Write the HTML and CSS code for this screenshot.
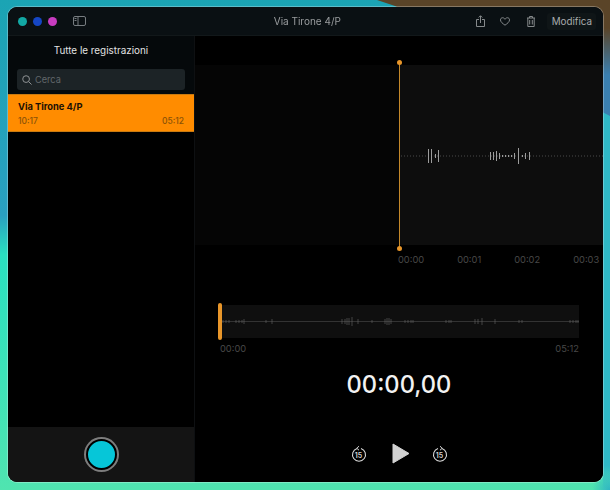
FILE: index.html
```html
<!DOCTYPE html>
<html>
  <head>
    <title>Memo Vocali</title>
    <link rel="stylesheet" href="styles.css">
  </head>
  <body>
    <div class="window">
      <header class="titlebar">
        <div class="lights">
          <span class="light teal"></span>
          <span class="light blue"></span>
          <span class="light pink"></span>
        </div>
        <svg class="sidebar-icon" width="13" height="10" viewBox="0 0 13 10" fill="none" stroke="#777d80" stroke-width="1">
          <rect x="0.5" y="0.5" width="12" height="9" rx="1.5"/>
          <path d="M5 0.5v9M1.5 2.5h2M1.5 4.5h2"/>
        </svg>
        <div class="doc-title">Via Tirone 4/P</div>
        <div class="tools">
          <svg class="share-icon" width="9" height="12" viewBox="0 0 9 12" fill="none" stroke="#85898b" stroke-width="1">
            <path d="M3 4.500H0.500v7h8v-7H6M4.500 8V1M2.700 2.500l1.800-1.800 1.800 1.800"/>
          </svg>
          <svg class="heart-icon" width="10" height="9" viewBox="0 0 13 11" fill="none" stroke="#85898b" stroke-width="1.300">
            <path d="M6.500 10.300C3.500 8.200.6 6 .6 3.400.6 1.800 1.800.6 3.300.6c1.300 0 2.500.8 3.200 2 .7-1.200 1.900-2 3.200-2 1.500 0 2.700 1.200 2.700 2.800 0 2.600-2.900 4.800-5.900 6.900z"/>
          </svg>
          <svg class="trash-icon" width="8" height="11" viewBox="0 0 8 11" fill="none" stroke="#85898b" stroke-width="1">
            <path d="M0 2h8M2.500 2V0.500h3V2M0.800 2v8.500h6.400V2M2.700 4v4.500M5.300 4v4.500"/>
          </svg>
          <span class="edit-btn">Modifica</span>
        </div>
      </header>
      <div class="content">
        <aside class="sidebar">
          <div class="sidebar-top">
            <h2 class="sidebar-title">Tutte le registrazioni</h2>
            <div class="search">
              <svg width="10" height="10" viewBox="0 0 11 11" fill="none" stroke="#8e9294" stroke-width="1.100">
                <circle cx="4.500" cy="4.500" r="3.700"/>
                <path d="M7.300 7.300l3.200 3.200"/>
              </svg>
              <span>Cerca</span>
            </div>
          </div>
          <div class="recording">
            <div class="rec-name">Via Tirone 4/P</div>
            <div class="rec-meta"><span>10:17</span><span>05:12</span></div>
          </div>
          <div class="rec-spacer"></div>
          <div class="rec-panel">
            <div class="rec-button"></div>
          </div>
        </aside>
        <main class="main">
          <section class="wave-wrap">
            <div class="playhead"></div>
            <div class="wave">
              <svg width="204" height="180" viewBox="0 0 204 180">
                <line x1="2" y1="91" x2="204" y2="91" stroke="#4a4a4a" stroke-width="1" stroke-dasharray="1 2"/>
                <g stroke="#9c9c9c" stroke-width="1">
                  <path d="M29.500 84v14M32.500 84v14M36.500 89v4M39.500 85v12"/>
                  <path d="M91.500 87v8M94.500 87v8M97.500 86v10M100.500 88v6M103.500 90v2M106.500 90v2M109.500 90v2M112.500 90v2M115.500 88v6M119.500 83v16M123.500 90v2M126.500 88v6M130.500 87v8"/>
                </g>
              </svg>
            </div>
            <div class="ruler">
              <span>00:00</span><span>00:01</span><span>00:02</span><span>00:03</span>
            </div>
          </section>
          <section class="overview">
            <div class="overview-track">
              <div class="overview-head"></div>
              <svg width="361" height="33" viewBox="0 0 361 33">
                <line x1="4" y1="16.500" x2="361" y2="16.500" stroke="#333" stroke-width="1"/>
                <g stroke="#6a6a6a" stroke-width="0.600">
                  <path d="M5 15v3M8 15v3M11 15v3M18 15v3M21 15v3M24 15v3M26 14v5M48 15v3M54 14v5M124 14v5M127 14v5M129 13v7M131 13v7M134 12v9M140 14v5"/>
                  <path d="M154 15v3M167 14v5M169 13v7M171 13v7M173 14v5M187 15v3M190 15v3M193 15v3M195 15v3M228 15v3M231 15v3M233 15v3M257 14v5M260 14v5M264 13v7M277 14v5M301 15v3M304 15v3M352 15v3M355 15v3M358 15v3M360 15v3"/>
                </g>
              </svg>
            </div>
            <div class="overview-times"><span>00:00</span><span>05:12</span></div>
          </section>
          <div class="timer">00:00,00</div>
          <div class="controls">
            <div class="skip">
              <svg width="16" height="18" viewBox="0 0 16 18" fill="none" stroke="#d8d8d8" stroke-width="1.100">
                <path d="M6 3.500a6.500 6.500 0 1 0 4 0"/>
                <path d="M8 1.200L5.800 3.300 8 5.200" stroke-width="1"/>
              </svg>
              <span>15</span>
            </div>
            <svg class="play" width="18" height="21" viewBox="0 0 18 21"><path d="M1 1l16 9.500L1 20z" fill="#d2d2d2" stroke="#d2d2d2" stroke-linejoin="round"/></svg>
            <div class="skip">
              <svg width="16" height="18" viewBox="0 0 16 18" fill="none" stroke="#d8d8d8" stroke-width="1.100">
                <path d="M6 3.500a6.500 6.500 0 1 0 4 0"/>
                <path d="M8 1.200l2.200 2.100L8 5.200" stroke-width="1"/>
              </svg>
              <span>15</span>
            </div>
          </div>
        </main>
      </div>
    </div>
  </body>
</html>
```

FILE: styles.css
```css
html, body {
  height: 100%;
  margin: 0;
}

body {
  box-sizing: border-box;
  padding: 7px 7px 8px 8px;
  overflow: hidden;
  font: normal 10px Inter, "Liberation Sans", sans-serif;
  color: #d0d0d0;
  background:
    radial-gradient(circle at 100% 100%, #2fb4c4 0, rgba(47, 180, 196, 0) 18px),
    linear-gradient(#2fb8c6 0, #2fb8c6 95%, rgba(47, 184, 198, 0) 100%) right top / 7px 100% no-repeat,
    linear-gradient(180deg, #1ba4b4 0, #2a9fc0 44%, #2ae0c0 52%, #50e4b0 100%);
}

/* brown and blue corner of the wallpaper */
body::before {
  position: fixed;
  top: 0;
  left: 0;
  width: 100%;
  height: 116px;
  content: "";
  clip-path: polygon(377px 0, 395px 6px, 610px 116px, 610px 0);
  background: linear-gradient(180deg, #5a4428 0, #5a4428 28px, #3a7fb0 75px);
}

.window {
  position: relative;
  display: flex;
  flex-direction: column;
  height: 100%;
  overflow: hidden;
  border-radius: 9px;
  background: #000;
  box-shadow: 0 0 0 1px rgba(255, 255, 255, .28);
}

.titlebar {
  display: flex;
  flex: none;
  align-items: center;
  height: 29px;
  padding: 0 7px 0 10px;
  background: #0a1013;
  border-bottom: 1px solid #12181a;
  box-sizing: border-box;
}

.lights {
  display: flex;
  gap: 6px;
}

.light {
  width: 9px;
  height: 9px;
  border-radius: 50%;
}

.teal { background: #12a8a4; }
.blue { background: #1546c4; }
.pink { background: #c83cc0; }

.sidebar-icon {
  margin-left: 16px;
}

.doc-title {
  flex: 1;
  padding-left: 53px;
  text-align: center;
  font-size: 10px;
  color: #9a9d9f;
}

.tools {
  display: flex;
  align-items: center;
}

.heart-icon {
  margin: 0 17px 0 15px;
}

.edit-btn {
  padding: 3px 4px 3px 5px;
  margin-left: 12px;
  font-size: 9.800px;
  color: #a8abac;
  background: #0f1517;
  border-radius: 3px;
}

.content {
  display: flex;
  flex: 1;
  min-height: 0;
}

.sidebar {
  display: flex;
  flex: none;
  flex-direction: column;
  width: 186px;
  border-right: 1px solid #0e1012;
  background: #000;
}

.sidebar-top {
  height: 58px;
  padding: 0 9px;
  background: #05090b;
}

.sidebar-title {
  margin: 0;
  padding: 8px 0 12px;
  font-size: 9.900px;
  font-weight: 400;
  line-height: 13px;
  text-align: center;
  color: #e2e2e2;
}

.search {
  display: flex;
  align-items: center;
  gap: 3px;
  height: 21px;
  padding-left: 5px;
  font-size: 9.200px;
  color: #62676a;
  background: #1c2326;
  border-radius: 3px;
}

.recording {
  flex: none;
  height: 38px;
  padding: 5px 10px 0 10px;
  box-sizing: border-box;
  background: #ff8c00;
  border-top: 1px solid #c97a10;
  border-bottom: 1px solid #c97a10;
}

.rec-name {
  font-size: 9.300px;
  font-weight: 700;
  line-height: 13px;
  color: #1a1005;
}

.rec-meta {
  display: flex;
  justify-content: space-between;
  padding-top: 3px;
  font-size: 8.500px;
  font-weight: 500;
  line-height: 11px;
  color: #8a5208;
}

.rec-spacer {
  flex: 1;
}

.rec-panel {
  display: flex;
  flex: none;
  align-items: center;
  justify-content: center;
  height: 55px;
  background: #141414;
}

.rec-button {
  width: 27px;
  height: 27px;
  background: #06c6d8;
  border: 2px solid #000;
  border-radius: 50%;
  box-shadow: 0 0 0 2px #7d7d7d;
}

.main {
  display: flex;
  flex: 1;
  flex-direction: column;
  background: #000;
}

.wave-wrap {
  position: relative;
  padding-top: 29px;
  background: linear-gradient(#050505, #050505) no-repeat 0 29px / 100% 180px;
}

.wave {
  height: 180px;
  margin-left: 204px;
  background: #0d0d0d;
}

.wave svg {
  display: block;
}

.playhead {
  position: absolute;
  top: 26px;
  left: 204px;
  width: 1px;
  height: 187px;
  background: #c4882a;
}

.playhead::before,
.playhead::after {
  position: absolute;
  left: -2px;
  width: 5px;
  height: 5px;
  content: "";
  background: #e8962a;
  border-radius: 50%;
}

.playhead::before { top: -2px; }
.playhead::after { bottom: -2px; }

.ruler {
  display: flex;
  gap: 33px;
  height: 23px;
  padding: 9px 0 0 203px;
  box-sizing: border-box;
  overflow: hidden;
  font-size: 9.300px;
  line-height: 12px;
  color: #484848;
  white-space: nowrap;
}

.overview {
  padding: 37px 24px 0 23px;
}

.overview-track {
  position: relative;
  height: 33px;
  background: #0f0f0f;
}

.overview-track svg {
  display: block;
}

.overview-head {
  position: absolute;
  top: -2px;
  left: 0;
  width: 4px;
  height: 37px;
  background: #e8962a;
  border-radius: 2px;
}

.overview-times {
  display: flex;
  justify-content: space-between;
  padding: 5px 0 0 2px;
  font-size: 9.300px;
  line-height: 12px;
  color: #484848;
}

.timer {
  padding-top: 15px;
  font-size: 23.700px;
  font-weight: 500;
  line-height: 30px;
  text-align: center;
  color: #f2f2f2;
}

.controls {
  display: flex;
  align-items: center;
  justify-content: center;
  gap: 22px;
  padding-top: 43px;
}

.play {
  margin-left: 3px;
}

.skip {
  position: relative;
  width: 16px;
  height: 18px;
}

.skip svg {
  display: block;
}

.skip span {
  position: absolute;
  top: 6px;
  left: 0;
  width: 16px;
  font-size: 7px;
  font-weight: 600;
  line-height: 9px;
  text-align: center;
  color: #d8d8d8;
}
```
